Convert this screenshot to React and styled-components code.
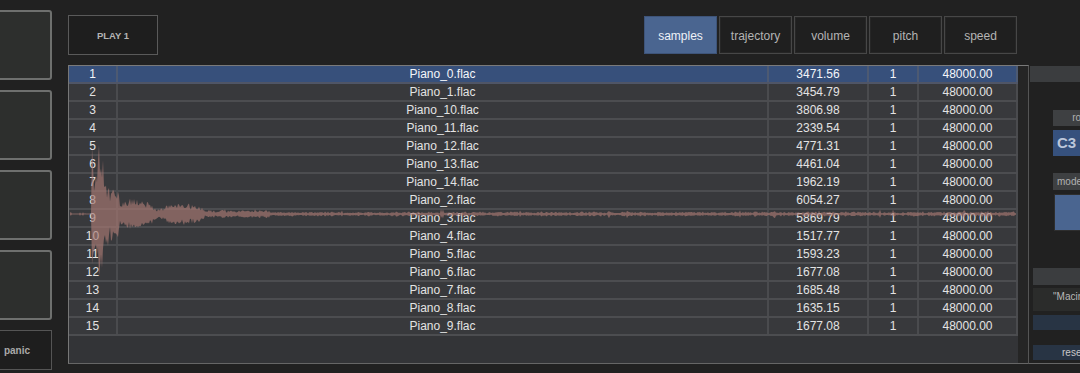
import styled, { createGlobalStyle } from "styled-components";

const GlobalStyle = createGlobalStyle`
  html, body {
    margin: 0;
    background: #212121;
    overflow: hidden;
    font-family: "Liberation Sans", Arial, sans-serif;
  }
`;

const samples = [
  ["Piano_0.flac", "3471.56"],
  ["Piano_1.flac", "3454.79"],
  ["Piano_10.flac", "3806.98"],
  ["Piano_11.flac", "2339.54"],
  ["Piano_12.flac", "4771.31"],
  ["Piano_13.flac", "4461.04"],
  ["Piano_14.flac", "1962.19"],
  ["Piano_2.flac", "6054.27"],
  ["Piano_3.flac", "5869.79"],
  ["Piano_4.flac", "1517.77"],
  ["Piano_5.flac", "1593.23"],
  ["Piano_6.flac", "1677.08"],
  ["Piano_7.flac", "1685.48"],
  ["Piano_8.flac", "1635.15"],
  ["Piano_9.flac", "1677.08"],
];

const tabs = ["samples", "trajectory", "volume", "pitch", "speed"];
const colWidths = [49, 651, 100, 50, 99];

// waveform of the selected sample, drawn over the list
function buildWave() {
  let s = 11;
  const rand = () => {
    s = (s * 16807) % 2147483647;
    return s / 2147483647;
  };
  const c = 148;
  const top = [];
  const bot = [];
  for (let x = 1; x <= 947; x++) {
    const ax = x + 69;
    let a;
    if (ax < 92) a = 0.7 + (rand() < 0.1 ? 1.2 : 0);
    else if (ax < 104) a = 38 + rand() * 32;
    else if (ax < 120) a = 26 + rand() * 14 - (ax - 104) * 0.6;
    else if (ax < 205)
      a =
        3 +
        12 * Math.abs(Math.sin((ax - 112) / 15)) * Math.exp(-(ax - 120) / 100) +
        rand() * 3;
    else if (ax < 270) a = 2 + rand() * 3;
    else a = 1 + rand() * 1.8 + (rand() < 0.03 ? 2.5 : 0);
    const up = a * (0.55 + rand() * 0.45);
    const dn = a * (0.55 + rand() * 0.45);
    top.push(`${x},${(c - up).toFixed(1)}`);
    bot.push(`${x},${(c + dn).toFixed(1)}`);
  }
  return top.concat(bot.reverse()).join(" ");
}

const wavePoints = buildWave();

function App() {
  return (
    <>
      <GlobalStyle />
      <Page>
        <PadColumn>
          <Pad />
          <Pad />
          <Pad />
          <Pad />
          <PanicButton>panic</PanicButton>
        </PadColumn>
        <Main>
          <TopBar>
            <PlayButton>PLAY 1</PlayButton>
            <Tabs>
              {tabs.map((t) => (
                <Tab key={t} $active={t === "samples"}>
                  {t}
                </Tab>
              ))}
            </Tabs>
          </TopBar>
          <Body>
            <Table>
              <TableBody>
                {samples.map(([name, len], idx) => {
                  const cells = [idx + 1, name, len, "1", "48000.00"];
                  return (
                    <Row key={name} $selected={idx === 0}>
                      {cells.map((v, i) => (
                        <Cell key={i} $w={colWidths[i]} $selected={idx === 0}>
                          {v}
                        </Cell>
                      ))}
                    </Row>
                  );
                })}
                <Wave viewBox="0 0 949 297" width="949" height="297">
                  <polygon points={wavePoints} fill="#a87a74" fillOpacity="0.66" />
                </Wave>
              </TableBody>
              <ScrollTrack />
            </Table>
            <SidePanel>
              <SideHeader />
              <ParamLabel $top={28} $center>
                root note
              </ParamLabel>
              <NoteBox>C3</NoteBox>
              <ParamLabel $top={17}>mode</ParamLabel>
              <ModeSwatch />
              <SideHeader $top={37} $left={4} $h={17} />
              <PathBox>"Macintosh HD"</PathBox>
              <DarkBar $top={4} />
              <DarkBar $top={15}>reset</DarkBar>
            </SidePanel>
          </Body>
        </Main>
      </Page>
    </>
  );
}

export default App;

const Page = styled.div`
  display: flex;
  padding-top: 10px;
  width: 1200px;
`;

const PadColumn = styled.div`
  display: flex;
  flex-direction: column;
  gap: 10px;
  width: 70px;
  margin-left: -18px;
  flex: none;
`;

const Pad = styled.div`
  height: 70px;
  box-sizing: border-box;
  border: 2px solid #6e706e;
  border-radius: 3px;
  background: #2d2f2d;
`;

const PanicButton = styled.div`
  height: 40px;
  box-sizing: border-box;
  border: 1px solid #555;
  background: #1e1e1e;
  color: #a9a9a9;
  font-size: 10px;
  font-weight: bold;
  display: flex;
  align-items: center;
  justify-content: center;
`;

const Main = styled.div`
  margin-left: 16px;
  display: flex;
  flex-direction: column;
  flex: none;
`;

const TopBar = styled.div`
  display: flex;
  align-items: flex-start;
  margin-top: 5px;
  height: 40px;
`;

const PlayButton = styled.div`
  width: 90px;
  height: 40px;
  box-sizing: border-box;
  border: 1px solid #5a5a5a;
  background: #1e1e1e;
  color: #b4b4b4;
  font-size: 9.5px;
  font-weight: bold;
  display: flex;
  align-items: center;
  justify-content: center;
`;

const Tabs = styled.div`
  display: flex;
  gap: 2px;
  margin-left: 486px;
  margin-top: 1px;
`;

const Tab = styled.div`
  width: 73px;
  height: 38px;
  box-sizing: border-box;
  border: 1px solid ${(p) => (p.$active ? "#3e5479" : "#474747")};
  box-shadow: inset 0 0 0 1px ${(p) => (p.$active ? "#4a6590" : "#262626")};
  background: ${(p) => (p.$active ? "#4a6590" : "#1f1f1f")};
  color: ${(p) => (p.$active ? "#eef2f8" : "#b4b4b4")};
  font-size: 12px;
  padding-top: 1px;
  display: flex;
  align-items: center;
  justify-content: center;
`;

const Body = styled.div`
  display: flex;
  margin-top: 10px;
`;

const Table = styled.div`
  width: 961px;
  height: 299px;
  box-sizing: border-box;
  border: 1px solid #555;
  border-top-color: #7a7a7a;
  border-left-color: #777;
  border-bottom-color: #666;
  display: flex;
`;

const TableBody = styled.div`
  position: relative;
  width: 949px;
  background: #333437;
`;

const ScrollTrack = styled.div`
  flex: 1;
  background: #252525;
`;

const Row = styled.div`
  display: flex;
  height: 18px;
  box-sizing: border-box;
  border-bottom: 2px solid ${(p) => (p.$selected ? "#4f5566" : "#4c4d50")};
  background: ${(p) => (p.$selected ? "#37507b" : "#38393c")};
  color: ${(p) => (p.$selected ? "#f4f6fa" : "#e3e3e3")};
`;

const Cell = styled.div`
  width: ${(p) => p.$w}px;
  box-sizing: border-box;
  border-right: 2px solid ${(p) => (p.$selected ? "#4d5a72" : "#4a4b4e")};
  text-align: center;
  font-size: 12px;
  line-height: 16px;
  white-space: nowrap;
`;

const Wave = styled.svg`
  position: absolute;
  left: 0;
  top: 0;
  pointer-events: none;
`;

const SidePanel = styled.div`
  width: 140px;
  height: 299px;
  box-sizing: border-box;
  border-bottom: 1px solid #666;
  padding-top: 1px;
  display: flex;
  flex-direction: column;
  flex: none;
`;

const SideHeader = styled.div`
  height: ${(p) => p.$h || 16}px;
  margin-top: ${(p) => p.$top || 0}px;
  margin-left: ${(p) => p.$left || 1}px;
  background: #3b3d3f;
`;

const ParamLabel = styled.div`
  margin: ${(p) => p.$top}px 0 0 24px;
  height: ${(p) => (p.$center ? 16 : 17)}px;
  width: 78px;
  background: #3e4042;
  color: #b0b0b0;
  font-size: 10px;
  line-height: ${(p) => (p.$center ? 16 : 17)}px;
  text-align: ${(p) => (p.$center ? "center" : "left")};
  padding-left: ${(p) => (p.$center ? 0 : 4)}px;
  box-sizing: border-box;
  white-space: nowrap;
`;

const NoteBox = styled.div`
  margin: 4px 0 0 24px;
  height: 26px;
  background: #36517d;
  color: #bcc7da;
  font-size: 15px;
  font-weight: bold;
  line-height: 26px;
  padding-left: 4px;
`;

const ModeSwatch = styled.div`
  margin: 4px 0 0 25px;
  width: 60px;
  height: 37px;
  box-sizing: border-box;
  border: 1px solid #2e2e2e;
  background: #4a6590;
`;

const PathBox = styled.div`
  margin: 3px 0 0 4px;
  height: 23px;
  box-sizing: border-box;
  background: #2b2c2b;
  color: #b8b8b8;
  font-size: 10px;
  padding: 3px 0 0 20px;
  white-space: nowrap;
`;

const DarkBar = styled.div`
  margin: ${(p) => p.$top}px 0 0 4px;
  height: 15px;
  background: #283444;
  color: #c8c8c8;
  font-size: 10px;
  line-height: 15px;
  padding-left: 29px;
`;
